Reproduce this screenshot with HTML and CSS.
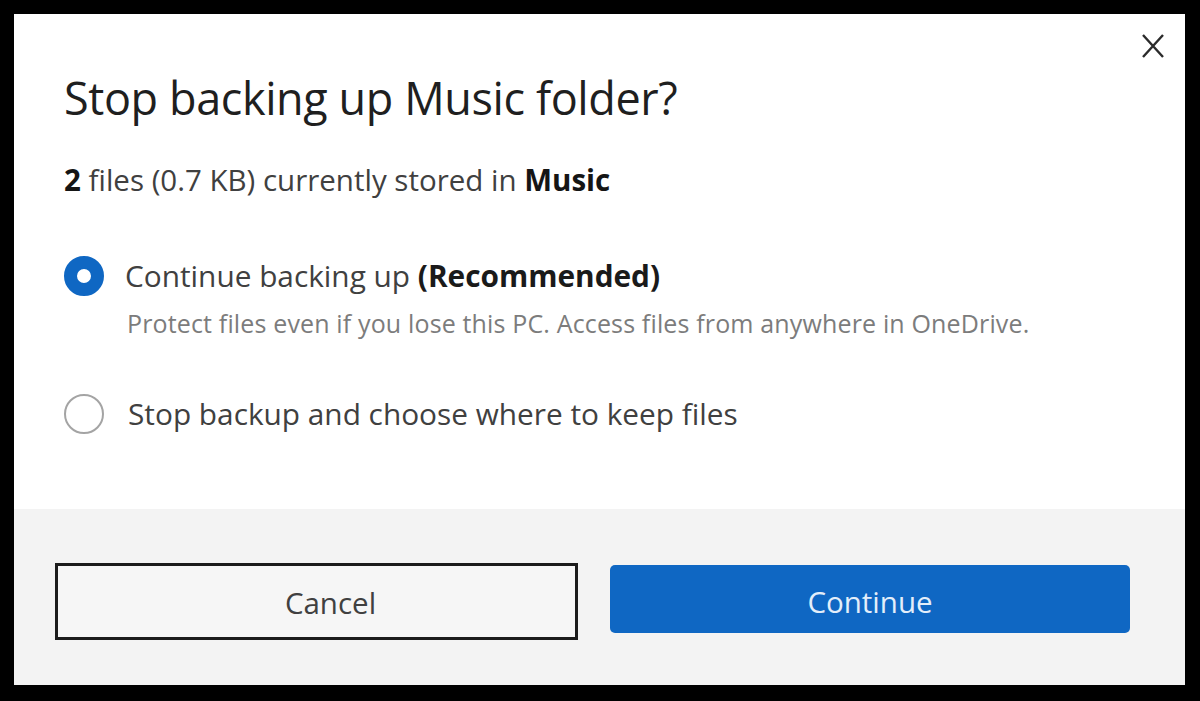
FILE: index.html
```html
<!DOCTYPE html>
<html lang="en">
<head>
<meta charset="utf-8">
<title>Stop backing up Music folder?</title>
<link rel="stylesheet" href="styles.css">
</head>
<body>
<div class="frame">
  <div class="dialog">
    <div class="content">
      <button class="close" aria-label="Close">
        <svg width="24" height="26" viewBox="0 0 24 26"><path d="M2 2 L22 24 M22 2 L2 24" stroke="#2b2b2b" stroke-width="2.4" fill="none"/></svg>
      </button>
      <h1 class="title">Stop backing up Music folder?</h1>
      <p class="summary"><b>2</b> files (0.7 KB) currently stored in <b>Music</b></p>
      <div class="options">
        <label class="option">
          <span class="radio checked"></span>
          <span class="option-text">
            <span class="option-label">Continue backing up <b>(Recommended)</b></span>
            <span class="option-desc">Protect files even if you lose this PC. Access files from anywhere in OneDrive.</span>
          </span>
        </label>
        <label class="option option-alt">
          <span class="radio"></span>
          <span class="option-text">
            <span class="option-label">Stop backup and choose where to keep files</span>
          </span>
        </label>
      </div>
    </div>
    <div class="footer">
      <button class="btn btn-cancel">Cancel</button>
      <button class="btn btn-primary">Continue</button>
    </div>
  </div>
</div>
</body>
</html>
```

FILE: styles.css
```css
* { box-sizing: border-box; }
html, body { margin: 0; padding: 0; }
body {
  background: #000;
  font-family: "Open Sans", "Noto Sans", sans-serif;
  width: 1200px;
  height: 701px;
  overflow: hidden;
}
.frame {
  padding: 14px 15px 16px 14px;
  height: 701px;
}
.dialog {
  background: #fff;
  height: 100%;
  display: flex;
  flex-direction: column;
}
.content {
  position: relative;
  flex: 1;
  padding: 61px 40px 0 50px;
}
.close {
  position: absolute;
  top: 19px;
  right: 20px;
  width: 24px;
  height: 26px;
  padding: 0;
  border: 0;
  background: transparent;
  display: flex;
}
.title {
  margin: 0;
  font-size: 45px;
  font-weight: 400;
  line-height: 45px;
  color: #1f1f1f;
  letter-spacing: -0.4px;
}
.summary {
  margin: 42px 0 0;
  font-size: 29.5px;
  line-height: 36px;
  color: #404040;
  letter-spacing: 0;
}
.summary b { color: #151515; font-weight: 700; }
.options {
  margin-top: 58px;
  display: flex;
  flex-direction: column;
  gap: 56px;
}
.option {
  display: flex;
  align-items: flex-start;
  gap: 21px;
}
.option-alt { gap: 24px; }
.radio {
  flex: none;
  width: 40px;
  height: 40px;
  border-radius: 50%;
  border: 2px solid #a4a4a4;
  background: #fff;
}
.radio.checked {
  border: 13px solid #0f67c3;
}
.option-text {
  display: flex;
  flex-direction: column;
}
.option-label {
  font-size: 29.8px;
  line-height: 40px;
  color: #404040;
  letter-spacing: 0;
}
.option-label b { color: #1a1a1a; font-weight: 700; }
.option-desc {
  margin-top: 12px;
  margin-left: 2px;
  font-size: 25px;
  line-height: 30px;
  color: #7c7c7c;
  letter-spacing: 0.15px;
}
.footer {
  height: 176px;
  background: #f3f3f3;
  display: flex;
  align-items: flex-start;
  padding: 54px 55px 0 41px;
  gap: 32px;
}
.btn {
  font-family: inherit;
  font-size: 29.5px;
  letter-spacing: 0;
  cursor: pointer;
}
.btn-cancel {
  width: 523px;
  height: 77px;
  background: #f6f6f6;
  border: 3px solid #1c1c1c;
  color: #404040;
  padding: 2px 0 0 28px;
}
.btn-primary {
  margin-top: 2px;
  width: 520px;
  height: 68px;
  background: #0f67c3;
  border: 0;
  border-radius: 5px;
  color: #e3eefa;
  padding-top: 6px;
}
```
